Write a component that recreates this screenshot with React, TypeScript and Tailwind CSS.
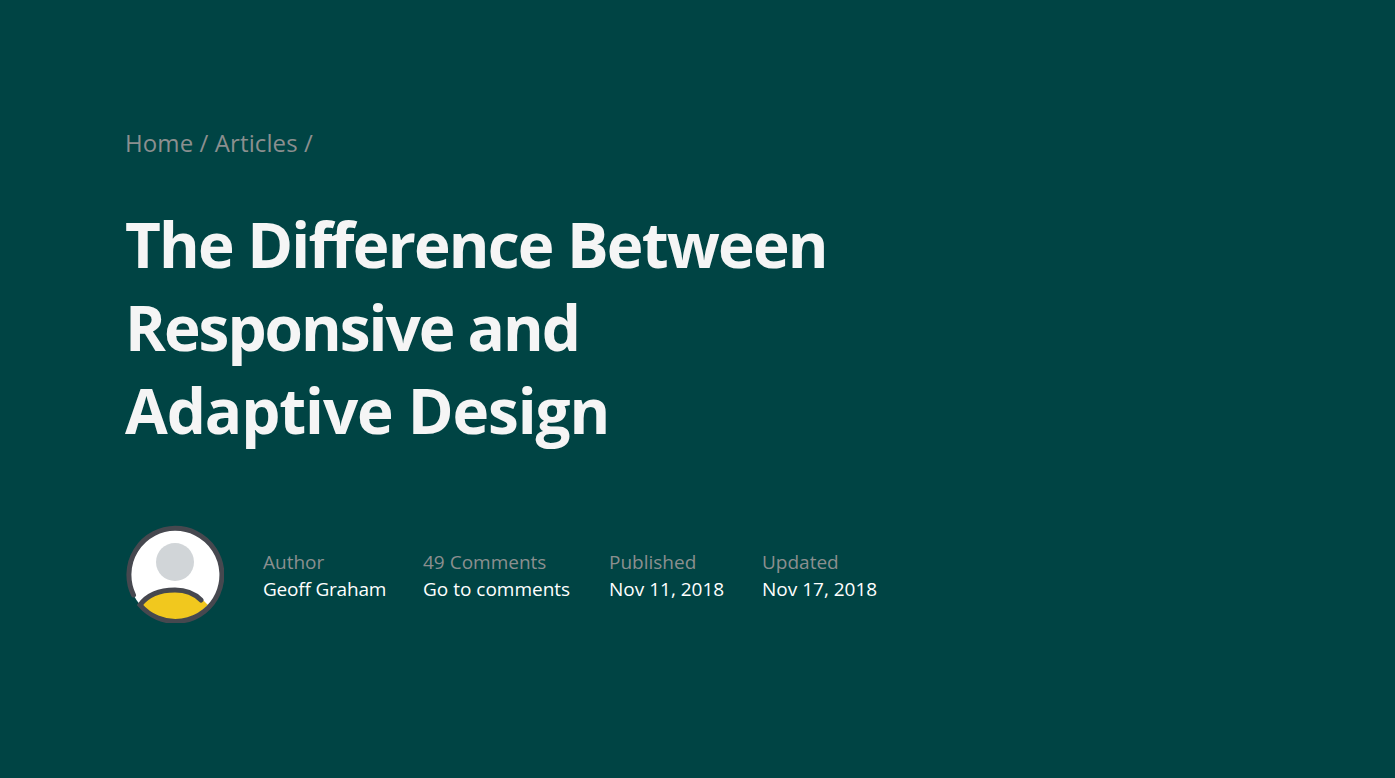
import React from 'react';

const meta = [
  { label: 'Author', value: 'Geoff Graham', track: 'tracking-[-0.2px]' },
  { label: '49 Comments', value: 'Go to comments', track: 'tracking-normal' },
  { label: 'Published', value: 'Nov 11, 2018', track: 'tracking-normal' },
  { label: 'Updated', value: 'Nov 17, 2018', track: 'tracking-normal' },
];

function Avatar() {
  return (
    <svg viewBox="0 0 98 98" className="ml-px w-[98px] h-[98px] shrink-0">
      <circle cx="49" cy="49" r="46.5" fill="#fff" />
      <circle cx="49" cy="37" r="19" fill="#d1d5d8" />
      <path d="M14 80 C22 69 36 65 49 65 C59 65 72 69 82 80 A46.5 46.5 0 0 1 14 80 Z" fill="#f1c81e" />
      <path
        d="M7.5 70 A46.5 46.5 0 1 1 14 80 C22 69 36 65 49 65 C59 65 68 68 75 75"
        fill="none"
        stroke="#46484f"
        strokeWidth="5"
        strokeLinecap="round"
      />
    </svg>
  );
}

export default function App() {
  return (
    <div className="min-h-screen bg-[#004444] pl-[125px] pt-[126px] font-['Open_Sans',sans-serif]">
      <div className="text-[24px] leading-[34px] text-[#8b8f8f] tracking-[0.1px]">Home / Articles /</div>
      <h1 className="mt-[43px] text-[62px] leading-[83px] font-bold text-[#f5f5f5] tracking-[-1.8px]">
        The Difference Between
        <br />
        <span className="tracking-[-2px]">Responsive and</span>
        <br />
        <span className="tracking-[-1.1px]">Adaptive Design</span>
      </h1>
      <div className="mt-[73px] flex items-center">
        <Avatar />
        <div className="ml-[39px] pt-[4px] grid grid-cols-[160px_186px_153px_auto]">
          {meta.map((m) => (
            <div key={m.label} className="text-[19px] leading-[27px]">
              <div className="text-[#8b8f8f]">{m.label}</div>
              <div className={`text-white ${m.track}`}>{m.value}</div>
            </div>
          ))}
        </div>
      </div>
    </div>
  );
}
